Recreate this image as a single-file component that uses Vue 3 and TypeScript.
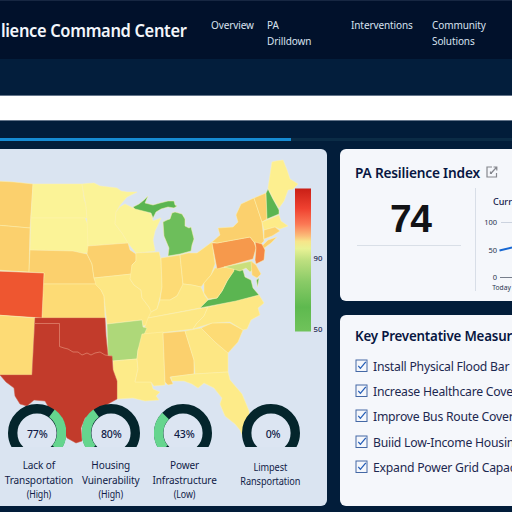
<script setup lang="ts">
interface Region { fill: string; points: string }
interface Gauge { value: string; arc: string; lines: string[]; level: string; x: number; shift: number; label: number }

const amber = '#fbd06d'
const gold = '#fddb75'
const sand = '#fde784'
const pale = '#fbf397'
const red = '#c23b2b'
const green = '#5bb551'

const regions: Region[] = [
  { fill: amber, points: '-4,181 14,182 33,184 30,228 -4,225' },
  { fill: amber, points: '-4,225 30,228 29,272 -4,270' },
  { fill: pale, points: '33,184 82,184 84,199 86,206 87,218 31,218' },
  { fill: pale, points: '31,218 85,218 88,225 88,253 82,253 73,251 30,250' },
  { fill: pale, points: '82,184 94,183 100,186 117,188 121,191 127,192 137,192 127,197 120,205 116,212 115,224 122,233 128,243 88,246 87,218 86,206' },
  { fill: pale, points: '120,207 125,204 133,208 142,210 151,214 153,221 161,218 155,231 153,240 155,251 136,253 128,243 122,233 115,224 116,212' },
  { fill: green, points: '133,207 139,204 144,200 148,196 145,203 153,205 160,203 168,201 174,201 175,205 177,206 174,208 168,207 161,209 156,212 153,218 151,213 143,211 135,209' },
  { fill: '#6dbe5b', points: '163,222 167,220 170,219 172,213 175,212 182,214 185,219 185,226 189,228 191,227 194,239 192,245 191,251 180,254 168,256 169,248 164,236' },
  { fill: amber, points: '30,250 73,251 82,253 87,254 92,264 94,278 97,284 43,284 44,273 29,272' },
  { fill: amber, points: '88,246 128,243 130,250 136,254 136,261 132,265 132,274 94,278 92,264 87,254' },
  { fill: gold, points: '43,284 97,284 101,290 104,296 105,318 42,318' },
  { fill: '#ee5630', points: '-4,271 44,273 42,318 -4,315' },
  { fill: sand, points: '94,278 132,274 130,279 134,285 141,290 142,298 149,307 152,312 148,320 147,325 143,326 142,320 107,324 104,296 101,290 96,285' },
  { fill: sand, points: '136,253 159,252 161,260 162,287 160,297 157,309 151,312 149,307 142,298 141,290 134,285 130,279 132,265 136,261' },
  { fill: gold, points: '161,258 180,255 183,285 177,296 170,300 160,300 162,287' },
  { fill: gold, points: '180,255 188,253 197,253 212,242 215,264 211,275 204,283 201,287 192,285 183,284' },
  { fill: sand, points: '151,312 157,309 160,300 170,300 177,296 183,284 192,285 201,287 205,296 208,300 200,308 148,318' },
  { fill: sand, points: '148,318 208,307 204,316 197,323 193,329 142,335' },
  { fill: '#aed879', points: '107,324 142,320 143,327 147,328 143,337 141,344 138,350 137,359 113,361 108,356' },
  { fill: '#fdeb89', points: '113,361 137,359 138,369 135,382 151,382 153,389 160,392 156,396 159,400 145,401 133,398 117,399 117,381 113,371' },
  { fill: sand, points: '142,334 163,332 165,385 154,386 151,382 135,382 138,369 137,359 138,350' },
  { fill: amber, points: '163,333 185,331 194,360 194,374 170,377 173,384 168,385 165,382' },
  { fill: sand, points: '185,331 201,328 215,342 228,353 228,372 195,374 194,360' },
  { fill: gold, points: '201,328 212,323 230,323 243,330 238,342 228,353 215,342' },
  { fill: sand, points: '208,307 259,295 264,303 258,308 260,315 251,320 247,329 243,330 230,322 212,323 193,329 197,323 204,316' },
  { fill: green, points: '200,308 208,300 217,298 222,291 227,281 235,268 243,270 245,277 251,280 253,288 259,295 236,301' },
  { fill: gold, points: '215,268 233,267 234,271 227,281 222,291 217,298 208,299 204,293 204,283 211,275' },
  { fill: '#f6994c', points: '212,243 217,243 250,237 254,242 256,248 253,259 217,269' },
  { fill: amber, points: '212,242 220,235 218,228 233,227 238,222 236,215 241,204 254,198 262,222 264,241 260,245 254,242 250,237 217,243' },
  { fill: amber, points: '261,247 268,240 277,237 271,243 263,249' },
  { fill: amber, points: '254,198 266,193 267,219 262,222' },
  { fill: green, points: '266,193 268,189 273,199 279,210 279,214 267,219' },
  { fill: '#fdef8f', points: '268,188 272,162 276,161 283,160 287,170 290,179 298,184 293,189 288,190 284,201 279,208 274,200' },
  { fill: '#fdeb88', points: '262,222 279,215 281,221 288,226 280,229 275,227 264,230' },
  { fill: amber, points: '264,230 275,227 280,231 272,236 264,239' },
  { fill: '#f48743', points: '255,242 262,244 265,250 264,260 256,264 255,260 256,248' },
  { fill: '#cadf7c', points: '224,267 252,261 253,269 250,272 246,268 240,271 233,269' },
  { fill: amber, points: '251,261 256,265 261,274 257,278 252,275' },
  { fill: green, points: '256.5,280 259,278 257.500,287' },
  { fill: gold, points: '-4,315 35,318 32,375 -4,375' },
  { fill: '#fdeb89', points: '171,377 194,374 228,372 230,380 242,394 249,411 250,428 245,441 240,430 235,424 225,416 220,404 222,398 214,388 204,383 198,388 192,384 184,381 172,381' },
]

const scale = [{ text: '90', y: 260.5 }, { text: '50', y: 332 }]

const gauges: Gauge[] = [
  { value: '77%', x: 37, shift: 2, label: 0.5, arc: 'M43.9 9.3A24.3 24.3 0 0 1 48 44.5', lines: ['Lack of', 'Transportation'], level: '(High)' },
  { value: '80%', x: 110.5, shift: 0, label: 0.5, arc: 'M14.1 9.3A24.3 24.3 0 0 0 10 44.5', lines: ['Housing', 'Vuinerability'], level: '(High)' },
  { value: '43%', x: 183, shift: 2, label: 1, arc: 'M11.6 12A24.3 24.3 0 0 0 10 44.5', lines: ['Power', 'Infrastructure'], level: '(Low)' },
  { value: '0%', x: 270.5, shift: 0, label: 2.5, arc: '', lines: ['Limpest', 'Ransportation'], level: '' },
]

const measures: string[] = [
  'Install Physical Flood Bar',
  'Increase Healthcare Cove',
  'Improve Bus Route Cover',
  'Buiid Low-Income Housin',
  'Expand Power Grid Capac',
]
</script>

<template>
  <div class="page">
    <header class="header">
      <h1>lience Command Center</h1>
      <nav>
        <a class="overview"><span>Overview</span></a>
        <a class="drill"><span>PA<br />Drilldown</span></a>
        <a class="inter"><span>Interventions</span></a>
        <a><span>Community<br />Solutions</span></a>
      </nav>
    </header>
    <div class="band"></div>
    <div class="search"></div>
    <div class="progress"><i></i></div>
    <main>
      <section class="map-card">
        <svg class="map" viewBox="0 149 327 357" width="327" height="357">
          <defs>
            <linearGradient id="heat" x1="0" y1="0" x2="0" y2="1">
              <stop offset="0" stop-color="#c91f16" />
              <stop offset=".14" stop-color="#ef4130" />
              <stop offset=".25" stop-color="#fb7955" />
              <stop offset=".33" stop-color="#fbbb78" />
              <stop offset=".37" stop-color="#f7e58a" />
              <stop offset=".42" stop-color="#e9f295" />
              <stop offset=".5" stop-color="#bfe080" />
              <stop offset=".65" stop-color="#8acb67" />
              <stop offset=".83" stop-color="#5eb94f" />
              <stop offset="1" stop-color="#70c35b" />
            </linearGradient>
          </defs>
          <polygon v-for="(r, i) in regions" :key="i" class="region" :points="r.points" :fill="r.fill" />
          <path class="texas" :fill="red" d="M35 318H105L106 336 108 356 112 356 113 370 117 381 117 399 108 404 98 410 85 418 81 428 82 441 76 443 67 438 62 429 52 413 45 401 34 400 27 406 20 404 15 396 14 388 6 382 0 375H32Z" />
          <path class="border" d="M35 323.500H59.500V346.500L64 348 68 349 73 352 78 352 82 355 87 353 91 355 95 353 100 352 105 355 112 356" />
          <rect x="295" y="188.500" width="16" height="143" fill="url(#heat)" />
          <text v-for="s in scale" :key="s.text" class="tick" x="313.500" :y="s.y">{{ s.text }}</text>
        </svg>
        <div v-for="g in gauges" :key="g.value" class="gauge" :style="{ left: g.x - 45 + 'px' }">
          <div class="dial">
            <svg width="58" height="43" viewBox="0 0 58 43">
              <circle cx="29" cy="29" r="24.3" fill="#dce5f2" stroke="#04252c" stroke-width="9.400" />
              <path v-if="g.arc" :d="g.arc" fill="none" stroke="#65d58e" stroke-width="9.400" />
            </svg>
            <span :style="{ marginLeft: g.label * 2 + 'px' }">{{ g.value }}</span>
          </div>
          <div class="caption" :class="{ small: !g.level }" :style="{ marginLeft: g.shift * 2 + 'px' }">
            <p v-for="l in g.lines" :key="l">{{ l }}</p>
            <p v-if="g.level" class="level">{{ g.level }}</p>
          </div>
        </div>
      </section>
      <div class="side">
        <section class="card index">
          <h2>
            <span class="title">PA Resilience Index</span>
            <svg width="12" height="12" viewBox="0 0 12 12" fill="none" stroke="#85878e" stroke-width="1.200">
              <path d="M6 1H1V11H10.500V7M7.500 1H10.800V4.500M10.800 1L4.800 7.500M4.500 5.500V7.500H6" />
            </svg>
          </h2>
          <div class="body">
            <div class="score">74</div>
            <div class="trend">
              <svg width="35" height="105" viewBox="0 0 35 105">
                <path d="M24 34.500H35" stroke="#ccd3df" />
                <path d="M23 89.500H35" stroke="#777e8b" />
                <path d="M22.500 62.500L35 59.500" stroke="#1767d2" stroke-width="2" fill="none" />
                <text class="heading" x="16" y="16.500" textLength="19" lengthAdjust="spacingAndGlyphs">Curr</text>
                <g class="axis" text-anchor="end">
                  <text x="20" y="37">100</text>
                  <text x="20" y="65">50</text>
                  <text x="20" y="92">0</text>
                </g>
                <text class="axis" x="15.300" y="101.500" textLength="18.500" lengthAdjust="spacingAndGlyphs">Today</text>
              </svg>
            </div>
          </div>
        </section>
        <section class="card measures">
          <h2><span class="title">Key Preventative Measur</span></h2>
          <ul>
            <li v-for="m in measures" :key="m">
              <svg width="13" height="14" viewBox="0 0 13 14" fill="none">
                <rect x="1" y="1" width="11" height="11.500" stroke="#4468a5" />
                <path d="M3.300 6.800L5.400 9.300L10.800 2.800" stroke="#255eb8" stroke-width="1.300" />
              </svg>
              <span>{{ m }}</span>
            </li>
          </ul>
        </section>
      </div>
    </main>
  </div>
</template>

<style>
body { margin: 0; background: #021d3a; }
</style>

<style scoped>
* { box-sizing: border-box; }
.page { width: 512px; height: 512px; overflow: hidden; display: flex; flex-direction: column; background: #021d3a; font-family: "Noto Sans", "Open Sans", sans-serif; color: #101b47; }
h1, h2, p, ul { margin: 0; padding: 0; }
.header { height: 59px; flex: none; display: flex; background: #01112b; border-top: 1px solid #172742; color: #f3f6fb; }
h1 { width: 211px; flex: none; padding: 18px 0 0 1px; font-size: 17px; line-height: 24px; font-weight: 600; letter-spacing: -.35px; white-space: nowrap; transform: scaleX(.968); transform-origin: 0 0; }
nav { display: flex; padding-top: 16px; font-size: 10.800px; line-height: 15.500px; color: #d9e2f0; white-space: nowrap; }
nav span { display: inline-block; letter-spacing: -.1px; transform: scaleX(.925); transform-origin: 0 0; }
.overview { width: 56px; }
.drill { width: 84px; }
.inter { width: 81px; }
.band { height: 36px; flex: none; background: #031e3c; }
.search { height: 26px; flex: none; background: #fff; border: solid #64758a; border-width: 1px 0; }
.progress { height: 3px; margin-top: 17px; flex: none; background: #0b2c46; }
.progress i { display: block; width: 291px; height: 3px; background: #168bd2; }
main { display: flex; gap: 13px; padding-top: 8px; }
.map-card { position: relative; width: 327px; height: 357px; flex: none; overflow: hidden; background: #dae4f1; border-radius: 0 6px 6px 0; }
.map { display: block; }
.region { stroke: #fff3ad; stroke-opacity: .7; stroke-width: .7; stroke-linejoin: round; }
.texas { stroke: #cf5942; stroke-width: .5; }
.border { fill: none; stroke: #e99a83; stroke-width: .6; }
.tick { font-size: 7.800px; font-weight: 500; fill: #1c2850; }
.gauge { position: absolute; top: 255px; width: 90px; display: flex; flex-direction: column; align-items: center; text-align: center; }
.dial { display: grid; justify-items: center; height: 43px; }
.dial svg, .dial span { grid-area: 1 / 1; }
.dial span { padding-top: 22px; font-size: 11.500px; line-height: 16px; letter-spacing: -.2px; font-weight: 500; transform: scaleX(.92); }
.caption { padding-top: 10px; font-size: 11.400px; line-height: 15px; white-space: nowrap; letter-spacing: -.1px; transform: scaleX(.88); }
.caption .level { font-size: 10px; line-height: 14px; }
.caption.small { padding-top: 13px; font-size: 10.200px; line-height: 14px; transform: scaleX(.9); }
.side { display: flex; flex-direction: column; gap: 14px; width: 172px; flex: none; }
.card { background: #f5f7fb; border-radius: 6px 0 0 6px; overflow: hidden; padding-left: 15px; }
.index { height: 152px; }
.measures { height: 191px; }
h2 { display: flex; align-items: center; font-size: 14.500px; line-height: 20px; font-weight: 600; letter-spacing: -.2px; white-space: nowrap; color: #071641; }
.title { transform: scaleX(.943); transform-origin: 0 50%; }
.index h2 { padding-top: 13px; }
.index .title { width: 131px; }
.measures h2 { padding-top: 10px; }
.measures .title { transform: scaleX(.918); }
.body { display: flex; padding: 5px 0 0 2px; }
.score { width: 104px; height: 59px; flex: none; padding: 10px 0 0 33px; font: 700 39px/44px "Liberation Sans", Arial, sans-serif; letter-spacing: -1.500px; color: #121316; border-bottom: 1px solid #d9dfe7; }
.trend { margin: 1px 0 0 14px; border-left: 1px solid #d8dee7; height: 103px; }
.trend svg { display: block; margin-left: 1px; }
.heading { font-size: 9.500px; font-weight: 500; fill: #14204a; }
.axis { font-size: 7.500px; fill: #27334e; }
ul { list-style: none; padding-top: 8.500px; }
li { display: flex; align-items: center; gap: 5px; height: 25.200px; font-size: 13.300px; letter-spacing: -.25px; white-space: nowrap; color: #1c2850; }
li svg { flex: none; }
li span { transform: scaleX(.918); transform-origin: 0 50%; }
</style>
